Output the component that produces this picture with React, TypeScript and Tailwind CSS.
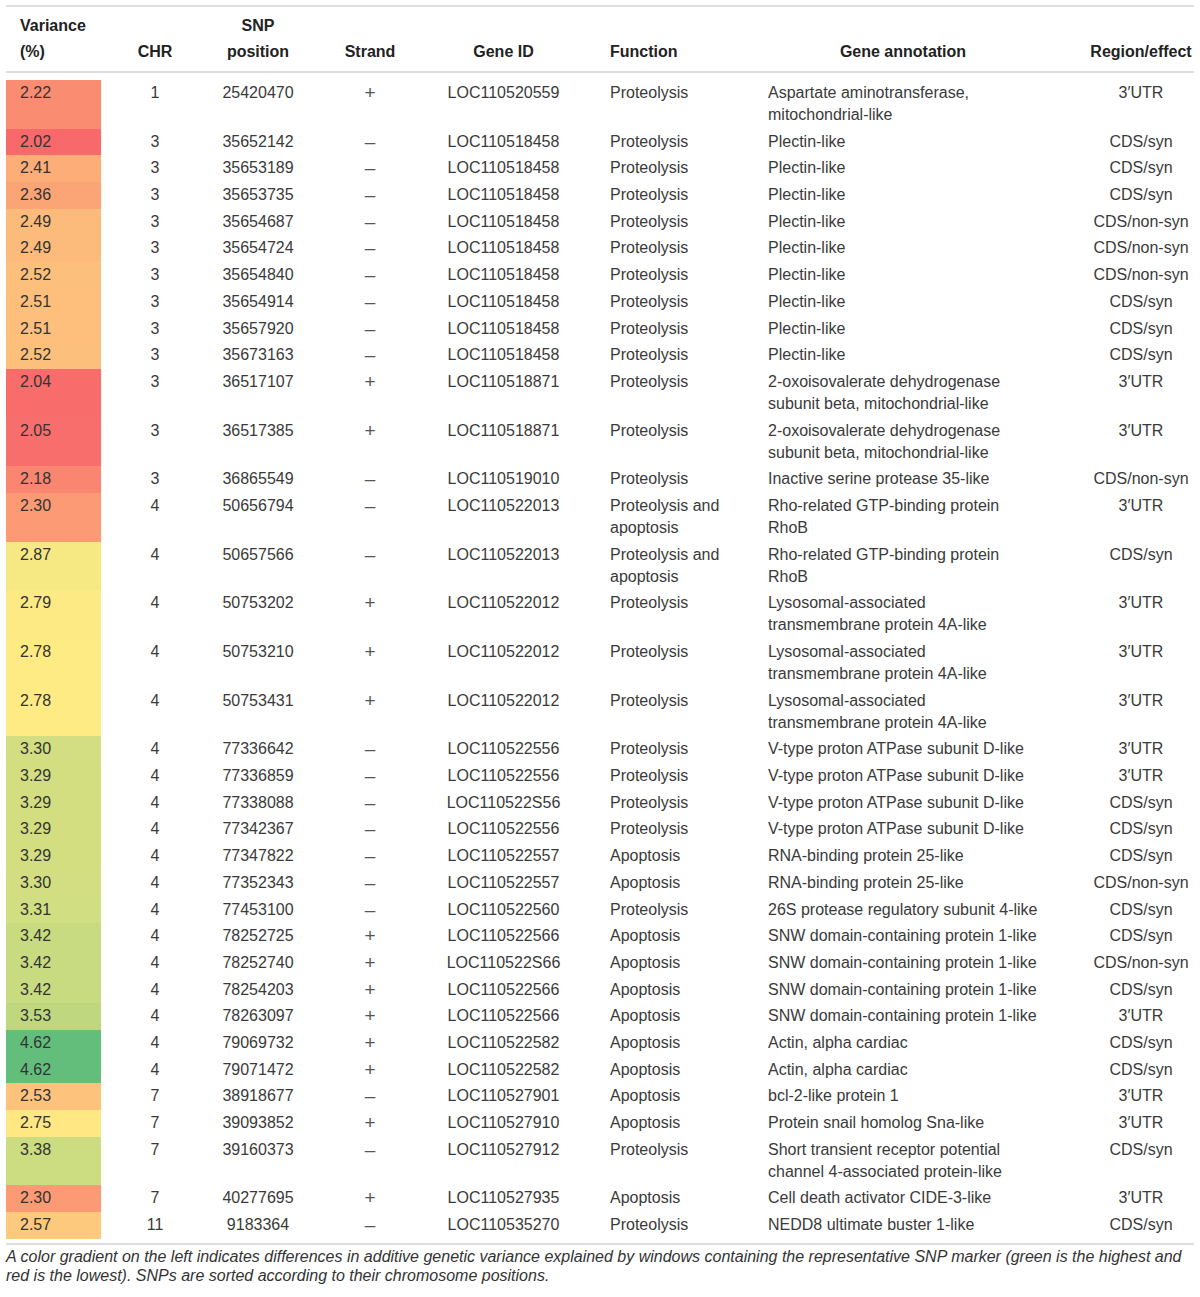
import React from "react";

type Row = {
  v: number;
  chr: string;
  pos: string;
  strand: string;
  gene: string;
  fn: string[];
  ann: string[];
  region: string;
};

const P = ["Proteolysis"];
const A = ["Apoptosis"];
const PA = ["Proteolysis and", "apoptosis"];
const PLECTIN = ["Plectin-like"];
const OXO = ["2-oxoisovalerate dehydrogenase", "subunit beta, mitochondrial-like"];
const RHO = ["Rho-related GTP-binding protein", "RhoB"];
const LYSO = ["Lysosomal-associated", "transmembrane protein 4A-like"];
const VTYPE = ["V-type proton ATPase subunit D-like"];
const RNA = ["RNA-binding protein 25-like"];
const SNW = ["SNW domain-containing protein 1-like"];
const ACTIN = ["Actin, alpha cardiac"];

const rows: Row[] = [
  { v: 2.22, chr: "1", pos: "25420470", strand: "+", gene: "LOC110520559", fn: P, ann: ["Aspartate aminotransferase,", "mitochondrial-like"], region: "3′UTR" },
  { v: 2.02, chr: "3", pos: "35652142", strand: "–", gene: "LOC110518458", fn: P, ann: PLECTIN, region: "CDS/syn" },
  { v: 2.41, chr: "3", pos: "35653189", strand: "–", gene: "LOC110518458", fn: P, ann: PLECTIN, region: "CDS/syn" },
  { v: 2.36, chr: "3", pos: "35653735", strand: "–", gene: "LOC110518458", fn: P, ann: PLECTIN, region: "CDS/syn" },
  { v: 2.49, chr: "3", pos: "35654687", strand: "–", gene: "LOC110518458", fn: P, ann: PLECTIN, region: "CDS/non-syn" },
  { v: 2.49, chr: "3", pos: "35654724", strand: "–", gene: "LOC110518458", fn: P, ann: PLECTIN, region: "CDS/non-syn" },
  { v: 2.52, chr: "3", pos: "35654840", strand: "–", gene: "LOC110518458", fn: P, ann: PLECTIN, region: "CDS/non-syn" },
  { v: 2.51, chr: "3", pos: "35654914", strand: "–", gene: "LOC110518458", fn: P, ann: PLECTIN, region: "CDS/syn" },
  { v: 2.51, chr: "3", pos: "35657920", strand: "–", gene: "LOC110518458", fn: P, ann: PLECTIN, region: "CDS/syn" },
  { v: 2.52, chr: "3", pos: "35673163", strand: "–", gene: "LOC110518458", fn: P, ann: PLECTIN, region: "CDS/syn" },
  { v: 2.04, chr: "3", pos: "36517107", strand: "+", gene: "LOC110518871", fn: P, ann: OXO, region: "3′UTR" },
  { v: 2.05, chr: "3", pos: "36517385", strand: "+", gene: "LOC110518871", fn: P, ann: OXO, region: "3′UTR" },
  { v: 2.18, chr: "3", pos: "36865549", strand: "–", gene: "LOC110519010", fn: P, ann: ["Inactive serine protease 35-like"], region: "CDS/non-syn" },
  { v: 2.3, chr: "4", pos: "50656794", strand: "–", gene: "LOC110522013", fn: PA, ann: RHO, region: "3′UTR" },
  { v: 2.87, chr: "4", pos: "50657566", strand: "–", gene: "LOC110522013", fn: PA, ann: RHO, region: "CDS/syn" },
  { v: 2.79, chr: "4", pos: "50753202", strand: "+", gene: "LOC110522012", fn: P, ann: LYSO, region: "3′UTR" },
  { v: 2.78, chr: "4", pos: "50753210", strand: "+", gene: "LOC110522012", fn: P, ann: LYSO, region: "3′UTR" },
  { v: 2.78, chr: "4", pos: "50753431", strand: "+", gene: "LOC110522012", fn: P, ann: LYSO, region: "3′UTR" },
  { v: 3.3, chr: "4", pos: "77336642", strand: "–", gene: "LOC110522556", fn: P, ann: VTYPE, region: "3′UTR" },
  { v: 3.29, chr: "4", pos: "77336859", strand: "–", gene: "LOC110522556", fn: P, ann: VTYPE, region: "3′UTR" },
  { v: 3.29, chr: "4", pos: "77338088", strand: "–", gene: "LOC110522S56", fn: P, ann: VTYPE, region: "CDS/syn" },
  { v: 3.29, chr: "4", pos: "77342367", strand: "–", gene: "LOC110522556", fn: P, ann: VTYPE, region: "CDS/syn" },
  { v: 3.29, chr: "4", pos: "77347822", strand: "–", gene: "LOC110522557", fn: A, ann: RNA, region: "CDS/syn" },
  { v: 3.3, chr: "4", pos: "77352343", strand: "–", gene: "LOC110522557", fn: A, ann: RNA, region: "CDS/non-syn" },
  { v: 3.31, chr: "4", pos: "77453100", strand: "–", gene: "LOC110522560", fn: P, ann: ["26S protease regulatory subunit 4-like"], region: "CDS/syn" },
  { v: 3.42, chr: "4", pos: "78252725", strand: "+", gene: "LOC110522566", fn: A, ann: SNW, region: "CDS/syn" },
  { v: 3.42, chr: "4", pos: "78252740", strand: "+", gene: "LOC110522S66", fn: A, ann: SNW, region: "CDS/non-syn" },
  { v: 3.42, chr: "4", pos: "78254203", strand: "+", gene: "LOC110522566", fn: A, ann: SNW, region: "CDS/syn" },
  { v: 3.53, chr: "4", pos: "78263097", strand: "+", gene: "LOC110522566", fn: A, ann: SNW, region: "3′UTR" },
  { v: 4.62, chr: "4", pos: "79069732", strand: "+", gene: "LOC110522582", fn: A, ann: ACTIN, region: "CDS/syn" },
  { v: 4.62, chr: "4", pos: "79071472", strand: "+", gene: "LOC110522582", fn: A, ann: ACTIN, region: "CDS/syn" },
  { v: 2.53, chr: "7", pos: "38918677", strand: "–", gene: "LOC110527901", fn: A, ann: ["bcl-2-like protein 1"], region: "3′UTR" },
  { v: 2.75, chr: "7", pos: "39093852", strand: "+", gene: "LOC110527910", fn: A, ann: ["Protein snail homolog Sna-like"], region: "3′UTR" },
  { v: 3.38, chr: "7", pos: "39160373", strand: "–", gene: "LOC110527912", fn: P, ann: ["Short transient receptor potential", "channel 4-associated protein-like"], region: "CDS/syn" },
  { v: 2.3, chr: "7", pos: "40277695", strand: "+", gene: "LOC110527935", fn: A, ann: ["Cell death activator CIDE-3-like"], region: "3′UTR" },
  { v: 2.57, chr: "11", pos: "9183364", strand: "–", gene: "LOC110535270", fn: P, ann: ["NEDD8 ultimate buster 1-like"], region: "CDS/syn" },
];

// three-colour scale: red (min) -> yellow (median) -> green (max)
const MIN = 2.02;
const MID = 2.765;
const MAX = 4.62;
const RED = [248, 105, 107];
const YELLOW = [255, 235, 132];
const GREEN = [99, 190, 123];

function scaleColor(v: number) {
  let from = RED;
  let to = YELLOW;
  let t = (v - MIN) / (MID - MIN);
  if (v > MID) {
    from = YELLOW;
    to = GREEN;
    t = (v - MID) / (MAX - MID);
  }
  const c = from.map((f, i) => Math.round(f + (to[i] - f) * t));
  return `rgb(${c[0]}, ${c[1]}, ${c[2]})`;
}

function Lines({ lines }: { lines: string[] }) {
  return (
    <>
      {lines.map((l, i) => (
        <div key={i} className="whitespace-nowrap">
          {l}
        </div>
      ))}
    </>
  );
}

export default function App() {
  const th = "font-bold text-[#222] align-bottom leading-[26px] pt-[6px] pb-[6px] border-t-2 border-b-2 border-[#dedede]";
  const td = "align-top leading-[22px] pt-[2px] pb-[2.7px]";

  return (
    <div className="bg-white w-[1200px] min-h-[1297px] pt-[5px] px-[6px] text-[16px] text-[#3a3a3a] font-['Liberation_Sans',Arial,sans-serif]">
      <table className="table-fixed border-collapse w-[1188px]">
        <colgroup>
          <col className="w-[95px]" />
          <col className="w-[108px]" />
          <col className="w-[98px]" />
          <col className="w-[126px]" />
          <col className="w-[141px]" />
          <col className="w-[182px]" />
          <col className="w-[294px]" />
          <col className="w-[144px]" />
        </colgroup>
        <thead>
          <tr>
            <th className={`${th} text-left pl-[14px]`}>
              Variance
              <br />
              (%)
            </th>
            <th className={`${th} text-center`}>CHR</th>
            <th className={`${th} text-center`}>
              SNP
              <br />
              position
            </th>
            <th className={`${th} text-center`}>Strand</th>
            <th className={`${th} text-center`}>Gene ID</th>
            <th className={`${th} text-left pl-[36px]`}>Function</th>
            <th className={`${th} text-center`}>Gene annotation</th>
            <th className={`${th} text-center pl-[38px] whitespace-nowrap`}>Region/effect</th>
          </tr>
        </thead>
        <tbody>
          <tr className="h-[8px]">
            <td colSpan={8} />
          </tr>
          {rows.map((r, i) => (
            <tr key={i}>
              <td className={`${td} pl-[14px] text-[#333]`} style={{ backgroundColor: scaleColor(r.v) }}>
                {r.v.toFixed(2)}
              </td>
              <td className={`${td} text-center`}>{r.chr}</td>
              <td className={`${td} text-center`}>{r.pos}</td>
              <td className={`${td} text-center text-[19px] text-[#555]`}>{r.strand}</td>
              <td className={`${td} text-center`}>{r.gene}</td>
              <td className={`${td} pl-[36px]`}>
                <Lines lines={r.fn} />
              </td>
              <td className={`${td} pl-[12px]`}>
                <Lines lines={r.ann} />
              </td>
              <td className={`${td} pl-[38px] text-center whitespace-nowrap`}>{r.region}</td>
            </tr>
          ))}
          <tr className="h-[5px]">
            <td colSpan={8} className="border-b-2 border-[#dedede]" />
          </tr>
        </tbody>
      </table>
      <p className="mt-[2px] text-[16px] leading-[19px] italic text-[#333]">
        A color gradient on the left indicates differences in additive genetic variance explained by windows containing the
        representative SNP marker (green is the highest and red is the lowest). SNPs are sorted according to their chromosome
        positions.
      </p>
    </div>
  );
}
